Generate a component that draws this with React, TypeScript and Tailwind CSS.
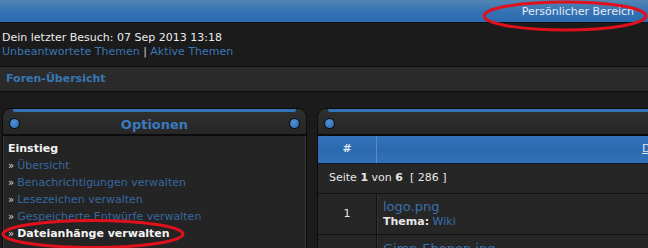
import React from "react";

const font = { fontFamily: '"DejaVu Sans", Verdana, sans-serif' };

function Dot() {
  return (
    <div className="w-[11px] h-[11px] shrink-0 rounded-full bg-[#0e0e0e] flex items-center justify-center">
      <div className="w-[9px] h-[9px] rounded-full bg-[radial-gradient(circle_at_40%_35%,#4f91d6,#2a66ad)]" />
    </div>
  );
}

function PanelHeader({ title, showRight = true }: { title?: string; showRight?: boolean }) {
  return (
    <div className="relative h-[28px] rounded-t-[9px] border border-[#0c0c0c] border-b-2 bg-gradient-to-b from-[#303030] to-[#262626]">
      <div className="absolute left-[10px] right-[10px] top-0 h-[3px] bg-[#3573b8] rounded-b-[2px]" />
      <div className="flex items-center h-full pt-[3px] px-[6px]">
        <Dot />
        <div className="flex-1 text-center text-[13px] font-bold text-[#3a7abf] leading-none pt-[2px]">{title}</div>
        {showRight && <Dot />}
      </div>
    </div>
  );
}

const menu = [
  "Übersicht",
  "Benachrichtigungen verwalten",
  "Lesezeichen verwalten",
  "Gespeicherte Entwürfe verwalten",
];

export default function App() {
  return (
    <div className="relative w-[648px] h-[248px] overflow-hidden bg-[#1b1b1b] text-[11px]" style={font}>
      {/* top bar */}
      <div className="h-[23px] border-b border-[#0b0f17] bg-gradient-to-b from-[#5286b4] via-[#3673b4] to-[#2b6bb1] flex items-center justify-end pr-[14px]">
        <span className="text-[11px] text-[#e4ecf5] leading-none">Persönlicher Bereich</span>
      </div>

      {/* info */}
      <div className="pt-[8px] pl-[2px] leading-[14px]">
        <div className="text-[#ececec]">Dein letzter Besuch: 07 Sep 2013 13:18</div>
        <div className="text-[#3a76b4]">
          Unbeantwortete Themen <span className="text-[#cfcfcf]">|</span> Aktive Themen
        </div>
      </div>

      {/* nav */}
      <div className="mt-[7px] h-[26px] border-t border-b border-[#0e0e0e] bg-[#2a2a2a] flex items-center pl-[6px]">
        <span className="font-bold text-[#3a76b4]">Foren-Übersicht</span>
      </div>

      {/* panels */}
      <div className="mt-[16px] flex gap-[10px] pl-[2px]">
        {/* left */}
        <div className="w-[305px] shrink-0">
          <PanelHeader title="Optionen" />
          <div className="border-x border-[#0c0c0c] bg-[#242424] h-[120px]">
            <div className="border-x border-[#383838] h-full px-[4px] pt-[4px] leading-[17px]">
              <div className="font-bold text-[#f2f2f2]">Einstieg</div>
              {menu.map((m) => (
                <div key={m} className="text-[#3668a0]">
                  <span className="text-[#d8d8d8] text-[10px] mr-[3px]">»</span>
                  {m}
                </div>
              ))}
              <div className="font-bold text-[#f4f4f4]">
                <span className="text-[#d8d8d8] text-[10px] mr-[3px] font-normal">»</span>
                Dateianhänge verwalten
              </div>
            </div>
          </div>
        </div>

        {/* right */}
        <div className="w-[360px] shrink-0">
          <PanelHeader title="" showRight={false} />
          <div className="border-l border-[#0c0c0c]">
            <div className="flex h-[28px] bg-gradient-to-b from-[#3474ba] via-[#2c6ab0] to-[#3372b8] border-b border-[#0f1a28]">
              <div className="w-[59px] shrink-0 flex items-center justify-center border-r border-[#5a8bc6] text-[#dfe8f3] font-bold">#</div>
              <div className="flex-1 min-w-0 flex items-center pl-[265px] text-[#dfe8f3] underline whitespace-nowrap overflow-hidden">Dateiname</div>
            </div>
            <div className="h-[30px] bg-[#262626] border-b border-[#111] flex items-center pl-[11px] text-[#e6e6e6]">
              Seite&nbsp;<b>1</b>&nbsp;von&nbsp;<b>6</b>&nbsp;&nbsp;[ 286 ]
            </div>
            <div className="flex h-[41px] bg-[#262626] border-b border-[#111]">
              <div className="w-[59px] shrink-0 flex items-center justify-center border-r border-[#111] text-[#e6e6e6]">1</div>
              <div className="flex-1 pl-[5px] pt-[5px] border-l border-[#333]">
                <div className="text-[13px] leading-[16px] text-[#3a70ad]">logo.png</div>
                <div className="leading-[14px] text-[#e6e6e6]">
                  <b>Thema:</b> <span className="text-[#3a70ad]">Wiki</span>
                </div>
              </div>
            </div>
            <div className="flex h-[41px] bg-[#262626] border-b border-[#111]">
              <div className="w-[59px] shrink-0 border-r border-[#111]" />
              <div className="flex-1 pl-[5px] pt-[6px] border-l border-[#333]">
                <div className="text-[13px] leading-[16px] text-[#3a70ad]">Gimp-Ebenen.jpg</div>
              </div>
            </div>
          </div>
        </div>
      </div>

      {/* red ellipse annotations */}
      <svg className="absolute inset-0 pointer-events-none" width="648" height="248">
        <ellipse cx="565" cy="16" rx="81" ry="14" fill="none" stroke="#e0101c" strokeWidth="3" />
        <ellipse cx="93" cy="234" rx="90" ry="13.5" fill="none" stroke="#e0101c" strokeWidth="3" />
      </svg>
    </div>
  );
}
